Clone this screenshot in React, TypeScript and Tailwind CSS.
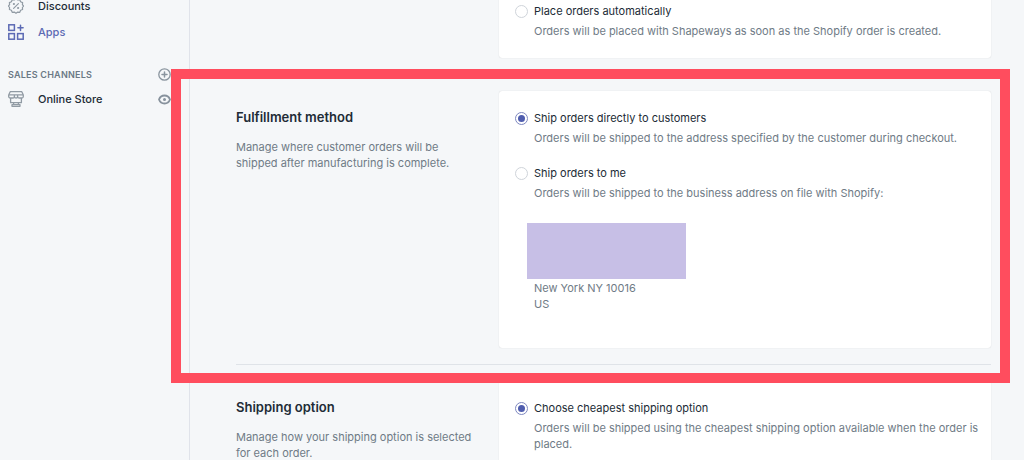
import type { ReactNode } from "react";
import { useState } from "react";

function DiscountIcon() {
  return (
    <svg viewBox="0 0 16 16" className="size-4 shrink-0" fill="none" stroke="currentColor" aria-hidden="true">
      <path
        d="M8 .8l1.700 1.200 2.100-.2.8 2 2 .8-.2 2L15.600 8l-1.200 1.500.2 2-2 .8-.8 2-2.100-.2L8 15.300l-1.700-1.200-2.100.2-.8-2-2-.8.2-2L.4 8l1.200-1.400-.2-2 2-.8.8-2 2.100.2z"
        strokeWidth="1.200"
        strokeLinejoin="round"
      />
      <path d="M10.400 5.600l-4.800 4.800" strokeWidth="1.200" strokeLinecap="round" />
      <circle cx="5.900" cy="6" r="1.100" fill="currentColor" stroke="none" />
      <circle cx="10.100" cy="10" r="1.100" fill="currentColor" stroke="none" />
    </svg>
  );
}

function AppsIcon() {
  return (
    <svg viewBox="0 0 16 16" className="size-4 shrink-0" fill="none" stroke="currentColor" strokeWidth="1.500" aria-hidden="true">
      <rect x="0.800" y="0.800" width="5.600" height="5.600" />
      <rect x="0.800" y="9.600" width="5.600" height="5.600" />
      <rect x="9.600" y="9.600" width="5.600" height="5.600" />
      <path d="M12.500 1.200v5.200M9.900 3.800h5.200" strokeLinecap="round" />
    </svg>
  );
}

function StoreIcon() {
  return (
    <svg viewBox="0 0 16 16" className="size-4 shrink-0" fill="none" stroke="currentColor" strokeWidth="1.300" strokeLinejoin="round" aria-hidden="true">
      <path d="M2.200.7h11.600L15.300 4v1.500c0 .9-.7 1.500-1.600 1.500H11c-.8 0-1.400-.6-1.400-1.500 0 .9-.7 1.500-1.600 1.500s-1.600-.6-1.600-1.500C6.400 6.400 5.800 7 5 7H2.300C1.400 7 .7 6.400.7 5.500V4z" />
      <path d="M1 3.900h14M6.400 3.900v1.600M9.600 3.900v1.600" />
      <path d="M2.600 7v4.700h10.800V7M5.600 11.700v2M10.400 11.700v2M4 15.300v-1.600h8v1.600z" />
    </svg>
  );
}

function PlusCircleIcon() {
  return (
    <svg viewBox="0 0 13 13" className="size-[13px]" fill="none" stroke="currentColor" aria-hidden="true">
      <circle cx="6.500" cy="6.500" r="5.700" strokeWidth="1.300" />
      <path d="M6.500 4v5M4 6.500h5" strokeWidth="1.500" strokeLinecap="round" />
    </svg>
  );
}

function EyeIcon() {
  return (
    <svg viewBox="0 0 13 13" className="size-[13px]" fill="none" stroke="currentColor" aria-hidden="true">
      <path d="M1 6.500C1.900 4 4 2.500 6.500 2.500S11.100 4 12 6.500c-.9 2.500-3 4-5.500 4S1.900 9 1 6.500z" strokeWidth="1.800" strokeLinejoin="round" />
      <circle cx="6.500" cy="6.500" r="1.500" fill="currentColor" stroke="none" />
    </svg>
  );
}

function Sidebar() {
  return (
    <nav className="w-[190px] shrink-0 border-r border-[#e0e3ea] pl-2 pr-[18px] text-[11px] leading-4 font-medium text-[#212b36]">
      <a href="#discounts" className="-mt-0.5 flex items-center gap-[14px]">
        <span className="text-[#919ba4]">
          <DiscountIcon />
        </span>
        Discounts
      </a>
      <a href="#apps" aria-current="page" className="mt-[10px] flex items-center gap-[14px] text-[#5c6ab4]">
        <AppsIcon />
        Apps
      </a>
      <div className="mt-[26px] flex items-center justify-between text-[#8a959f]">
        <h2 className="pt-px text-[9px] leading-4 font-semibold tracking-wide text-[#6b7985] uppercase">Sales channels</h2>
        <button type="button" aria-label="Add sales channel">
          <PlusCircleIcon />
        </button>
      </div>
      <div className="mt-2 flex items-center justify-between">
        <a href="#online-store" className="flex items-center gap-[14px]">
          <span className="text-[#919ba4]">
            <StoreIcon />
          </span>
          Online Store
        </a>
        <button type="button" aria-label="View your online store" className="text-[#87929d]">
          <EyeIcon />
        </button>
      </div>
    </nav>
  );
}

interface RadioOptionProps {
  id: string;
  name: string;
  label: string;
  help: string;
  checked: boolean;
  onSelect: () => void;
}

function RadioOption({ id, name, label, help, checked, onSelect }: RadioOptionProps) {
  return (
    <div>
      <div className="flex items-center gap-[6px]">
        <input
          type="radio"
          id={id}
          name={name}
          checked={checked}
          onChange={onSelect}
          aria-describedby={`${id}-help`}
          className="grid size-[13px] shrink-0 appearance-none place-content-center rounded-full border border-[#cfd4da] bg-white before:size-[7px] before:rounded-full checked:border-[#7e88c0] checked:before:bg-[#4f5dae]"
        />
        <label htmlFor={id} className="text-[11px] leading-4 text-[#212b36]">
          {label}
        </label>
      </div>
      <p id={`${id}-help`} className="mt-1 pl-[19px] text-[11px] leading-4 text-[#6f7b86]">
        {help}
      </p>
    </div>
  );
}

function SectionIntro({ title, text }: { title: string; text: string }) {
  return (
    <div className="pt-4 pr-6">
      <h2 className="text-[13px] leading-5 font-semibold text-[#212b36]">{title}</h2>
      <p className="mt-3 text-[11px] leading-4 text-[#6f7b86]">{text}</p>
    </div>
  );
}

function Card({ className, children }: { className: string; children: ReactNode }) {
  return <div className={`bg-white pr-2 pl-4 shadow-[0_0_1px_rgba(63,63,68,0.25)] ${className}`}>{children}</div>;
}

export default function App() {
  const [placement, setPlacement] = useState("manual");
  const [method, setMethod] = useState("customer");
  const [shipping, setShipping] = useState("cheapest");

  return (
    <div className="flex h-screen overflow-hidden bg-[#f5f7f9] font-[Inter,sans-serif]">
      <Sidebar />
      <main className="min-w-0 flex-1 pr-[33px] pl-[46px]">
        <section className="grid grid-cols-[263px_1fr] border-b border-[#dfe3e8] pb-4">
          <div />
          <Card className="rounded-b-[3px] pt-[3px] pb-[19px]">
            <RadioOption
              id="place-auto"
              name="placement"
              label="Place orders automatically"
              help="Orders will be placed with Shapeways as soon as the Shopify order is created."
              checked={placement === "auto"}
              onSelect={() => setPlacement("auto")}
            />
          </Card>
        </section>

        <section className="relative grid grid-cols-[263px_1fr] border-b border-[#dfe3e8] py-4">
          <SectionIntro
            title="Fulfillment method"
            text="Manage where customer orders will be shipped after manufacturing is complete."
          />
          <Card className="rounded-[3px] pt-[19px] pb-9">
            <RadioOption
              id="ship-customer"
              name="method"
              label="Ship orders directly to customers"
              help="Orders will be shipped to the address specified by the customer during checkout."
              checked={method === "customer"}
              onSelect={() => setMethod("customer")}
            />
            <div className="mt-[19px]">
              <RadioOption
                id="ship-me"
                name="method"
                label="Ship orders to me"
                help="Orders will be shipped to the business address on file with Shopify:"
                checked={method === "me"}
                onSelect={() => setMethod("me")}
              />
            </div>
            <div className="mt-[22px] ml-3 h-14 w-[159px] bg-[#c7bfe6]" />
            <address className="mt-px pl-[19px] text-[11px] leading-4 text-[#6f7b86] not-italic">
              New York NY 10016
              <br />
              US
            </address>
          </Card>
          {/* callout frame, spills over the sidebar and the neighbouring sections */}
          <div className="pointer-events-none absolute -top-[6px] -right-[19px] -bottom-[19px] -left-[65px] z-10 border-[10px] border-[#ff4d5e]" />
        </section>

        <section className="grid grid-cols-[263px_1fr] pt-4">
          <SectionIntro
            title="Shipping option"
            text="Manage how your shipping option is selected for each order."
          />
          <Card className="rounded-t-[3px] pt-[19px] pb-9">
            <RadioOption
              id="ship-cheapest"
              name="shipping"
              label="Choose cheapest shipping option"
              help="Orders will be shipped using the cheapest shipping option available when the order is placed."
              checked={shipping === "cheapest"}
              onSelect={() => setShipping("cheapest")}
            />
          </Card>
        </section>
      </main>
    </div>
  );
}
